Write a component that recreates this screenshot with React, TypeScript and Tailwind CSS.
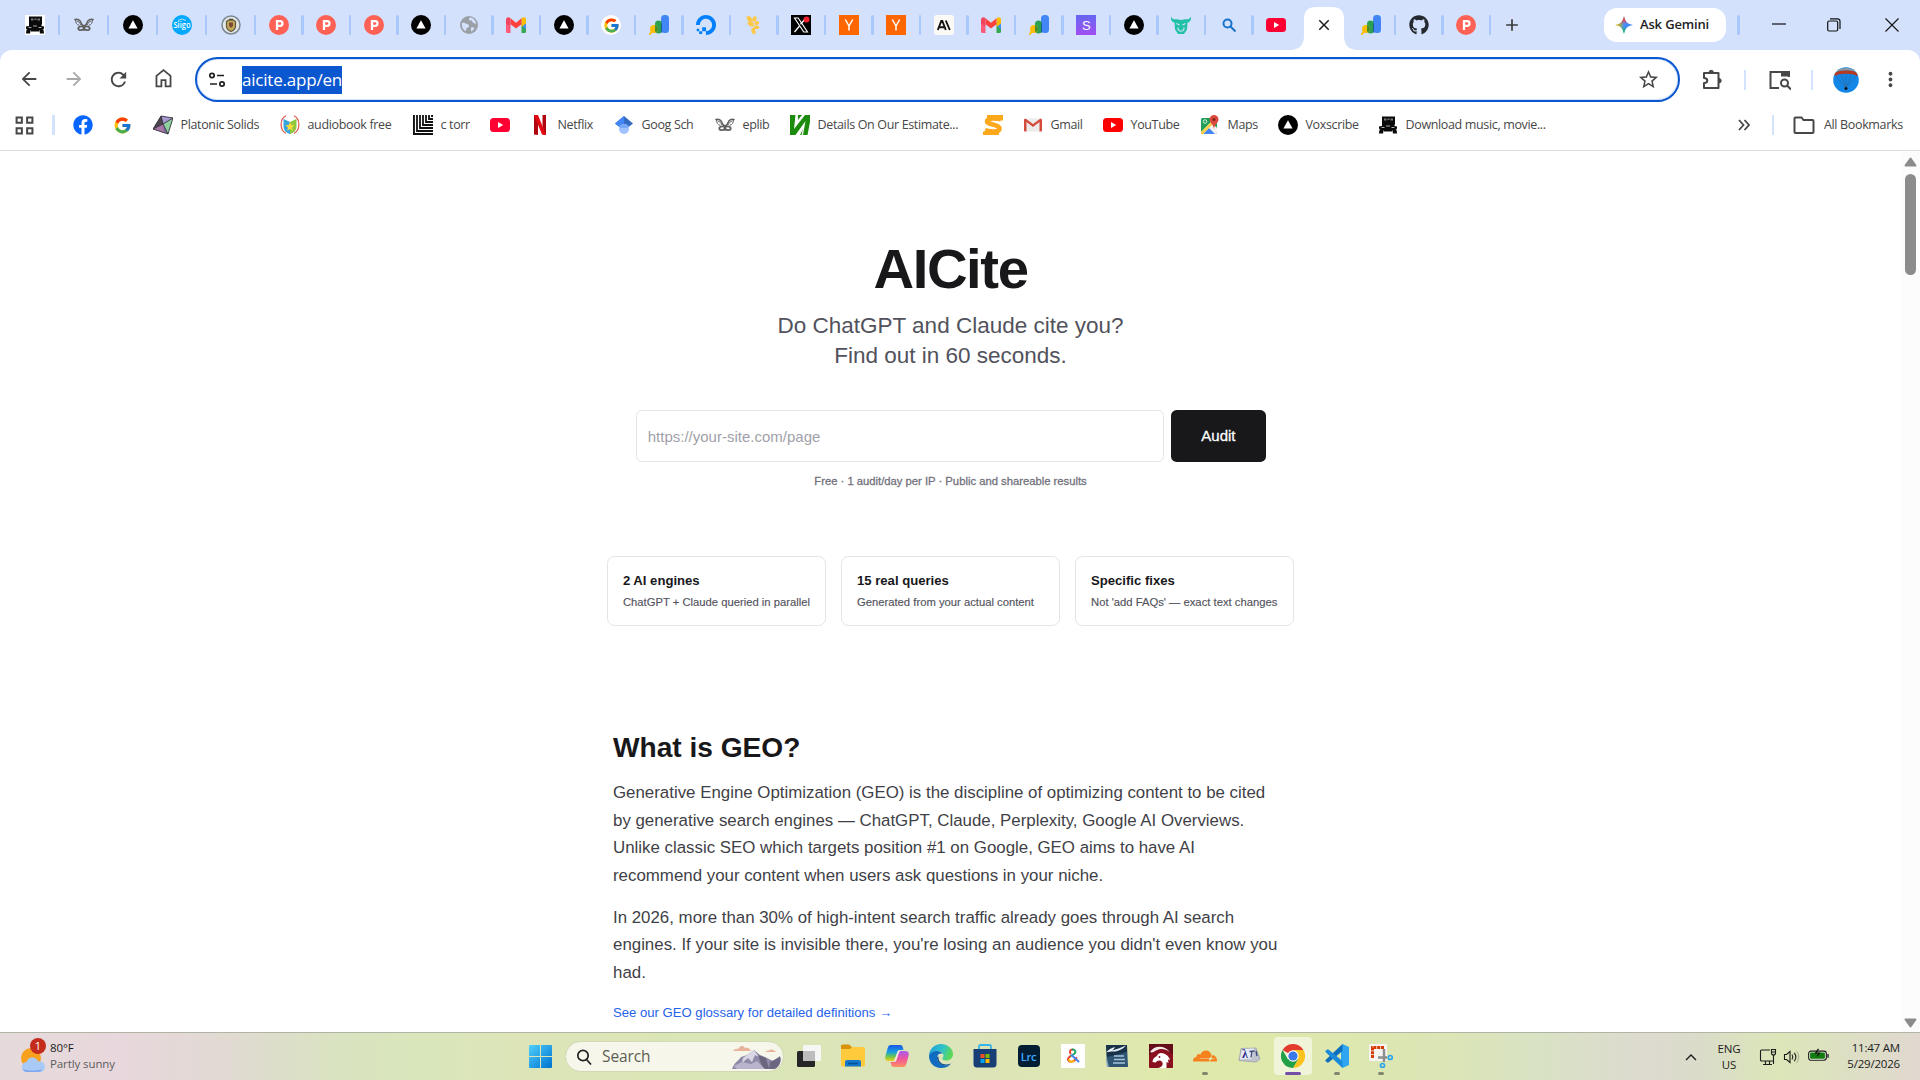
import React from 'react';
import { FcGoogle } from 'react-icons/fc';
import { FaFacebook, FaGithub } from 'react-icons/fa';
import { SiDigitalocean, SiCloudflare } from 'react-icons/si';
import { MdArrowBack, MdArrowForward, MdRefresh, MdStarOutline, MdMoreVert, MdAdd, MdClose } from 'react-icons/md';

/* ---------- Favicons ---------- */

const TruckIcon = () => (
  <svg viewBox="0 0 20 20" className="w-5 h-5">
    <rect width="20" height="20" fill="#fff" />
    <path d="M4 1.500h13v8H4z" fill="#0a0a0a" />
    <path d="M6 3.500h2.500v2H6zM9.500 3.500h2v1.500h-2zM12.500 3.500H15v2h-2.500z" fill="#777" />
    <path d="M1 11.500l3-.5V9h12.500v2l2.500.5v2l-2 1.500H3l-2-1.500z" fill="#0a0a0a" />
    <path d="M1.500 14.500L6 14l-1 4.500H1zM14 14l4.500.5.500 4h-4z" fill="#0a0a0a" />
    <path d="M6 14.500h8v2H6z" fill="#0a0a0a" />
    <path d="M3.500 12.500h3M13.500 12.500h3M8 11h4" stroke="#bbb" strokeWidth=".9" />
  </svg>
);

const MothIcon = () => (
  <svg viewBox="0 0 20 20" className="w-5 h-5" fill="none" stroke="#5f5f5f" strokeLinecap="round">
    <path d="M1 4.500c2.500-.8 5 .2 5.800 2.700.6 2 1.400 3.300 3.200 4.300 1.800-1 2.600-2.300 3.200-4.300.8-2.500 3.300-3.500 5.800-2.700" strokeWidth="1.500" />
    <path d="M1.500 5c.2 3 1 4.500 3.500 5.300M18.500 5c-.2 3-1 4.500-3.500 5.300M3 6c2 .5 3 2 3.500 3.500M17 6c-2 .5-3 2-3.500 3.500" strokeWidth="1" />
    <path d="M9 11.500c-3-.5-4.700.5-4.700 2S7 16 10 14c3 2 5.700 1 5.700-.5s-1.700-2.500-4.700-2" strokeWidth="1.900" />
    <path d="M10 11v3.500" strokeWidth="2.500" />
  </svg>
);

const VercelIcon = () => (
  <svg viewBox="0 0 20 20" className="w-5 h-5">
    <circle cx="10" cy="10" r="10" fill="#000" />
    <path d="M10 5.200l4.600 8.300H5.400z" fill="#fff" />
  </svg>
);

const SiigoIcon = () => (
  <svg viewBox="0 0 20 20" className="w-5 h-5">
    <circle cx="10" cy="10" r="10" fill="#00a9ff" />
    <text x="10" y="13.200" textAnchor="middle" fontSize="8.500" fontWeight="600" fontFamily="Open Sans, sans-serif" fill="#fff" textLength="17" lengthAdjust="spacingAndGlyphs">Siigo</text>
    <path d="M6 5.500q4-3 8 0" stroke="#fff" strokeWidth=".7" fill="none" />
  </svg>
);

const CrestIcon = () => (
  <svg viewBox="0 0 20 20" className="w-5 h-5">
    <circle cx="10" cy="10" r="9" fill="#e3e6e2" stroke="#7b8894" strokeWidth="1.500" />
    <path d="M5.500 6.500l2-1.500h5l2 1.500V11c0 3-2 4.500-4.500 5.500-2.500-1-4.500-2.500-4.500-5.500z" fill="#c4a95a" stroke="#5f5a45" strokeWidth="1.200" />
    <path d="M8 7.500h4V11l-2 2-2-2z" fill="#7a4a33" />
    <path d="M8 4.500h4" stroke="#4b4b3c" strokeWidth="1.500" />
  </svg>
);

const ProductIcon = () => (
  <svg viewBox="0 0 20 20" className="w-5 h-5">
    <circle cx="10" cy="10" r="10" fill="#ff6154" />
    <path d="M8 15V6.200h3.200a2.300 2.300 0 010 4.600H8" fill="none" stroke="#fff" strokeWidth="2.300" />
  </svg>
);

const GlobeIcon = () => (
  <svg viewBox="0 0 20 20" className="w-5 h-5">
    <circle cx="10" cy="10" r="9" fill="#9aa0a6" />
    <path d="M3 8c3-1 4 1 6 1.500 2 .5 1 3-1 3.500-1 .3-.5 3-2 3C3.500 14 2.500 11 3 8zM11 2.500c-2 1.500-1 3 1 3 1.500 0 1 2 2.500 2.500 1.500.4 2 .5 2.700 2 .3-4-2.700-7-6.200-7.500zM12 12.500c1.500-.5 3 0 3.500 1-.8 1.300-2 2.300-3.500 3z" fill="#d3e1fd" />
  </svg>
);

const GmailIcon = () => (
  <svg viewBox="0 0 20 20" className="w-5 h-5">
    <path d="M15.500 8v10h3a1.500 1.500 0 001.500-1.500V5z" fill="#34a853" />
    <path d="M20 7.500v7l-4.500-4z" fill="#3f8ff5" />
    <path d="M15.500 12L20 8.500V4.500c0-2.500-2.500-3-4.500-1.300z" fill="#fbbc04" />
    <path d="M4.500 3.200L10 7.700l5.500-4.500v6L10 13.600 4.500 9.200z" fill="#fc413d" />
    <path d="M4.500 3.200C2.500 1.500 0 2.300 0 4.800V9l4.500 3.500z" fill="#f2445c" />
    <path d="M0 8.500l4.500 3.800V18h-3A1.500 1.500 0 010 16.500z" fill="#ff5a7a" />
  </svg>
);

const OldGmailIcon = () => (
  <svg viewBox="0 0 20 20" className="w-5 h-5">
    <rect x="1" y="3.500" width="18" height="13" rx="1.500" fill="#ececec" />
    <path d="M1 5v10.500a1 1 0 001 1h1.500V7l6.500 5 6.500-5v9.500H18a1 1 0 001-1V5c0-1-1.300-1.700-2.200-1L10 9 3.200 4C2.300 3.300 1 4 1 5z" fill="#d54b3d" />
  </svg>
);

const WhiteGoogle = () => (
  <span className="w-5 h-5 rounded-full bg-white flex items-center justify-center">
    <FcGoogle size={17} />
  </span>
);

const AnalyticsIcon = () => (
  <svg viewBox="0 0 20 20" className="w-5 h-5">
    <rect x="12" y="0" width="8" height="18" rx="3.500" fill="#4285f4" />
    <rect x="6" y="5.500" width="7" height="13" rx="3.500" fill="#2aa050" />
    <path d="M12 7.500c.8.700 1 1.500 1 2.500v5c0 1.500-.5 2.500-1 3z" fill="#1a5c8a" />
    <circle cx="5" cy="14" r="4" fill="#fbbc04" />
    <path d="M6 10.200a4 4 0 013 3.800 4 4 0 01-2 3.500c-1-1-1-2-1-3.500z" fill="#3f8f2f" />
    <path d="M3.500 15.500L1 19" stroke="#fbbc04" strokeWidth="2" strokeLinecap="round" />
  </svg>
);

const PlantIcon = () => (
  <svg viewBox="0 0 20 20" className="w-5 h-5" fill="#fbc84a">
    <ellipse cx="5.500" cy="4" rx="3.400" ry="2.200" transform="rotate(45 5.500 4)" />
    <ellipse cx="10.500" cy="4" rx="2" ry="2.800" transform="rotate(15 10.500 4)" />
    <ellipse cx="6.500" cy="9" rx="3.300" ry="2" transform="rotate(35 6.500 9)" />
    <ellipse cx="12.800" cy="8" rx="2.500" ry="1.900" transform="rotate(-25 12.800 8)" />
    <ellipse cx="12.500" cy="12.300" rx="2.900" ry="1.800" />
    <ellipse cx="9.500" cy="16" rx="2" ry="3.300" transform="rotate(-15 9.500 16)" />
    <path d="M8 6l3 6-1 4" stroke="#fbc84a" fill="none" />
  </svg>
);

const XIcon = () => (
  <svg viewBox="0 0 20 20" className="w-5 h-5">
    <rect width="20" height="20" fill="#000" />
    <path d="M3.500 3h3.700l9.300 14h-3.700z" fill="none" stroke="#fff" strokeWidth="1.100" />
    <path d="M15 3l-5.500 6.200M8.500 11L3.500 17" stroke="#fff" strokeWidth="1.300" />
    <circle cx="15.500" cy="4.500" r="3" fill="#f4212e" />
  </svg>
);

const YcIcon = () => (
  <svg viewBox="0 0 20 20" className="w-5 h-5">
    <rect width="20" height="20" fill="#ff6600" />
    <path d="M6.300 4.500L10 11l3.700-6.500M10 11v4.500" stroke="#fff" strokeWidth="1.500" fill="none" />
  </svg>
);

const AnthropicIcon = () => (
  <svg viewBox="0 0 20 20" className="w-5 h-5">
    <rect width="20" height="20" rx="3" fill="#faf9f5" />
    <path d="M3.800 15L7.300 6h1L11.800 15M5.300 12.200h5M11.800 5.500L15.800 15" stroke="#141413" strokeWidth="1.900" fill="none" />
  </svg>
);

const PurpleSIcon = () => (
  <span className="w-5 h-5 bg-linear-to-b from-[#6366f1] to-[#a04df2] flex items-center justify-center text-white text-[13px] leading-none font-['Liberation_Sans',sans-serif]">S</span>
);

const BullIcon = () => (
  <svg viewBox="0 0 20 20" className="w-5 h-5">
    <path d="M0 1.500C1 4 3 4.500 6 4.200L10 5l4-.8c3 .3 5-.2 6-2.700.5 3-.8 5.500-3.500 6l-.5 7L13 19H7l-3-4.500-.5-7C.8 7-.5 4.500 0 1.500z" fill="#22c1a5" />
    <path d="M5.500 8.500l3 1.500M14.500 8.500l-3 1.500" stroke="#d3e1fd" strokeWidth="1.300" />
    <path d="M7 12.500V14l1.500 2h3l1.500-2v-1.500" fill="none" stroke="#d3e1fd" strokeWidth="1.200" />
  </svg>
);

const SearchTabIcon = () => (
  <svg viewBox="0 0 20 20" className="w-5 h-5" fill="none" stroke="#1a73c8">
    <circle cx="8.500" cy="8.500" r="4" strokeWidth="2" />
    <path d="M11.500 11.500l5 5" strokeWidth="2" />
  </svg>
);

const YoutubeIcon = ({ color = '#ff0033' }: { color?: string }) => (
  <svg viewBox="0 0 20 20" className="w-5 h-5">
    <rect x="0" y="3" width="20" height="14" rx="3.500" fill={color} />
    <path d="M8 7l5.200 3L8 13z" fill="#fff" />
  </svg>
);

const PolyhedronIcon = () => (
  <svg viewBox="0 0 20 20" className="w-5 h-5">
    <path d="M8 1l12 2-5 16L0 14z" fill="#7f6a9c" />
    <path d="M8 1l12 2-10 6z" fill="#a79ad0" />
    <path d="M8 1l2 8-10 5z" fill="#4b4650" />
    <path d="M20 3l-5 16-5-10z" fill="#8fce9d" />
    <path d="M0 14l10-5 1 9z" fill="#a978a8" />
    <path d="M8 1l12 2-5 16L0 14zM20 3L10 9 8 1M0 14l10-5 5 10" fill="none" stroke="#2b2b33" strokeWidth=".8" />
  </svg>
);

const AudiobookIcon = () => (
  <svg viewBox="0 0 20 20" className="w-5 h-5">
    <path d="M6 .8C-.5 4-.5 15 6 18.500M14 .8c6.500 3.200 6.500 14.200 0 17.700" fill="none" stroke="#e2574c" strokeWidth="1.200" />
    <path d="M3.500 4l6.500 3v12c-4-1-6.500-4-6.500-8z" fill="#38a4dd" />
    <path d="M16.500 4L10 7v12c4-1 6.500-4 6.500-8z" fill="#8dc63f" />
    <path d="M10 7l1.300 3 3.200.3-2.500 2.200.8 3.200L10 14l-2.800 1.700.8-3.200-2.500-2.200 3.200-.3z" fill="#ffd93b" />
  </svg>
);

const MazeIcon = () => (
  <svg viewBox="0 0 20 20" className="w-5 h-5">
    <rect width="20" height="20" fill="#111" />
    <path d="M2.500 0v17.500H20M5.500 0v14.500H20M8.500 0v11.500H20M11.500 0v8.500H20M14.500 0v5.500H20M17.500 0v2.500H20" fill="none" stroke="#fff" strokeWidth="1.200" />
  </svg>
);

const NetflixIcon = () => (
  <svg viewBox="0 0 20 20" className="w-5 h-5">
    <path d="M4 0h4v20l-4-.5zM12.500 0h3.500v20l-3.500-.5z" fill="#b1060f" />
    <path d="M4 0h4l8 20-4-.5z" fill="#e50914" />
  </svg>
);

const ScholarIcon = () => (
  <svg viewBox="0 0 20 20" className="w-5 h-5">
    <path d="M10 1L1 8.500l4.500 3.500h9L19 8.500z" fill="#356ac3" />
    <path d="M1 8.500L5.500 12H10V1z" fill="#4285f4" />
    <circle cx="10" cy="14" r="5" fill="#a0c3ff" />
    <path d="M5.300 12a5 5 0 019.400 0L13 13H7z" fill="#76a7fa" />
  </svg>
);

const GreenIcon = () => (
  <svg viewBox="0 0 20 20" className="w-5 h-5">
    <path d="M0 0h5.500L4 14 15 0h5v7l-2.500 13H13l2.500-14L5.500 20H0z" fill="#1c8c0c" />
    <path d="M8 0h4L8 5zM7 20h3l3-6-1.500 6z" fill="#1c8c0c" />
  </svg>
);

const OrangeSIcon = () => (
  <svg viewBox="0 0 20 20" className="w-5 h-5">
    <path d="M4 1.800h16M0 18.200h16" stroke="#fba81c" strokeWidth="3.600" />
    <path d="M18 5.500V4.300c-3-1-13.500-1.800-14 1.700-.5 4 12.500 3 12.500 7.700 0 4-11 3-14.500 1.500" fill="none" stroke="#fba81c" strokeWidth="4.600" />
  </svg>
);

const MapsIcon = () => (
  <svg viewBox="0 0 20 20" className="w-5 h-5">
    <rect x="1" y="3" width="16" height="16" rx="1.500" fill="#1e9e58" />
    <path d="M1 17L11 7l6 6v4.500a1.500 1.500 0 01-1.500 1.500h-13A1.500 1.500 0 011 17.500z" fill="#f3f3f3" />
    <path d="M3 19l6-6 6 6z" fill="#4285f4" />
    <path d="M1 17L14 4l2 2L3 19H1z" fill="#fdd048" />
    <path d="M14 0a4.500 4.500 0 014.500 4.500C18.500 8 14.500 9 14 14c-.5-5-4.500-6-4.500-9.500A4.500 4.500 0 0114 0z" fill="#dc4b3e" />
    <circle cx="14" cy="4.500" r="1.600" fill="#7b231e" />
    <circle cx="5" cy="6.500" r="1.800" fill="none" stroke="#fff" strokeWidth=".8" />
  </svg>
);

/* ---------- Browser ---------- */

interface Tab {
  icon: React.ReactNode;
  width?: string;
  active?: boolean;
  last?: boolean;
}

const tabs: Tab[] = [
  { icon: <TruckIcon />, width: 'w-[49px]' },
  { icon: <MothIcon />, width: 'w-[49px]' },
  { icon: <VercelIcon />, width: 'w-[49px]' },
  { icon: <SiigoIcon />, width: 'w-[49px]' },
  { icon: <CrestIcon />, width: 'w-[49px]' },
  { icon: <ProductIcon /> },
  { icon: <ProductIcon /> },
  { icon: <ProductIcon /> },
  { icon: <VercelIcon /> },
  { icon: <GlobeIcon /> },
  { icon: <GmailIcon /> },
  { icon: <VercelIcon /> },
  { icon: <WhiteGoogle /> },
  { icon: <AnalyticsIcon /> },
  { icon: <SiDigitalocean size={20} color="#0080ff" /> },
  { icon: <PlantIcon /> },
  { icon: <XIcon /> },
  { icon: <YcIcon /> },
  { icon: <YcIcon /> },
  { icon: <AnthropicIcon /> },
  { icon: <GmailIcon /> },
  { icon: <AnalyticsIcon /> },
  { icon: <PurpleSIcon /> },
  { icon: <VercelIcon /> },
  { icon: <BullIcon /> },
  { icon: <SearchTabIcon /> },
  { icon: <YoutubeIcon />, last: true },
  { icon: <MdClose size={18} color="#1f1f1f" />, active: true },
  { icon: <AnalyticsIcon /> },
  { icon: <FaGithub size={20} color="#24292f" /> },
  { icon: <ProductIcon /> },
];

const TabStrip = () => (
  <div className="h-[50px] bg-[#d3e1fd] flex items-center pl-[10px]">
    {tabs.map((tab, i) =>
      tab.active ? (
        <div key={i} className="relative w-[47.500px] h-full pt-[7px] flex justify-center">
          <svg viewBox="0 0 68 43" className="absolute -left-[10px] bottom-0 w-[68px] h-[43px]">
            <path d="M0 43c9 0 14-5 14-14V12C14 4 18 0 26 0h16c8 0 12 4 12 12v17c0 9 5 14 14 14z" fill="#fff" />
          </svg>
          <div className="relative h-[36px] flex items-center">{tab.icon}</div>
        </div>
      ) : (
        <div key={i} className={`relative h-5 flex items-center justify-center ${tab.width ?? 'w-[47.500px]'}`}>
          {tab.icon}
          {!tab.last && <span className="absolute -right-px top-0 w-[2.500px] h-5 rounded bg-[#a8c7fa]" />}
        </div>
      )
    )}
    <MdAdd size={20} color="#3c3c3c" className="ml-[12px]" />
    <div className="ml-[82px] w-[122px] h-[34px] rounded-[13px] bg-white flex items-center pl-[11px] gap-[7px]">
      <svg viewBox="0 0 20 20" className="w-[18px] h-[18px]">
        <defs>
          <linearGradient id="gem" x1="0" y1="0" x2="1" y2="0">
            <stop offset="0" stopColor="#fbbc04" />
            <stop offset=".3" stopColor="#9aa85a" />
            <stop offset=".5" stopColor="#4b8df8" />
            <stop offset="1" stopColor="#3186ff" />
          </linearGradient>
          <linearGradient id="gemV" x1="0" y1="0" x2="0" y2="1">
            <stop offset="0" stopColor="#f2423a" />
            <stop offset=".2" stopColor="#f2423a" />
            <stop offset=".45" stopColor="#f2423a" stopOpacity="0" />
            <stop offset=".6" stopColor="#0ebc5f" stopOpacity="0" />
            <stop offset=".85" stopColor="#0ebc5f" />
          </linearGradient>
        </defs>
        <path d="M10 0c1 6 4 9 10 10-6 1-9 4-10 10-1-6-4-9-10-10 6-1 9-4 10-10z" fill="url(#gem)" />
        <path d="M10 0c1 6 4 9 10 10-6 1-9 4-10 10-1-6-4-9-10-10 6-1 9-4 10-10z" fill="url(#gemV)" />
      </svg>
      <span className="text-[13px] font-semibold tracking-[-0.15px] text-[#1f1f1f] whitespace-nowrap">Ask Gemini</span>
    </div>
    <span className="ml-[11px] w-[2.500px] h-5 rounded bg-[#a8c7fa]" />
    <svg viewBox="0 0 14 14" className="ml-[32px] w-[14px] h-[14px]" stroke="#111" strokeWidth="1.200"><path d="M0 6h14" /></svg>
    <svg viewBox="0 0 14 14" className="ml-[41px] w-[14px] h-[14px]" fill="none" stroke="#111" strokeWidth="1.200">
      <rect x=".7" y="3" width="10" height="10" rx="1.500" />
      <path d="M3 .8h7.500a2.500 2.500 0 012.500 2.500V11" />
    </svg>
    <svg viewBox="0 0 14 14" className="ml-[44px] w-[14px] h-[14px]" stroke="#111" strokeWidth="1.100"><path d="M.5.500l13 13M13.500.500l-13 13" /></svg>
  </div>
);

const Toolbar = () => (
  <div className="h-[45px] flex items-center">
    <div className="flex pl-[6px] mr-[9px] text-[#474747]">
      <div className="w-[45px] flex justify-center"><MdArrowBack size={22} /></div>
      <div className="w-[45px] flex justify-center"><MdArrowForward size={22} color="#a9a9a9" /></div>
      <div className="w-[45px] flex justify-center"><MdRefresh size={23} /></div>
      <div className="w-[45px] flex justify-center">
        <svg viewBox="0 0 20 20" className="w-[21px] h-[21px]" fill="none" stroke="#474747" strokeWidth="1.700">
          <path d="M3.300 7.500L10 2l6.700 5.500v10H12v-6H8v6H3.300z" />
        </svg>
      </div>
    </div>
    <div className="w-[1485px] h-[45px] rounded-full border-[2.500px] border-[#0b57d0] shadow-[inset_0_0_0_1px_#a8c7fa80] flex items-center pl-[11px]">
      <svg viewBox="0 0 18 18" className="w-[18px] h-[18px]" fill="none" stroke="#1f1f1f" strokeWidth="1.700">
        <circle cx="4" cy="4.500" r="2.200" />
        <path d="M9 4.500h7M2 13h7" />
        <circle cx="14" cy="13" r="2.200" />
      </svg>
      <div className="ml-4 h-7 bg-[#0b57d0] text-white text-[17px] leading-[28px] tracking-[-0.2px] whitespace-nowrap">aicite.app/en</div>
      <MdStarOutline size={23} color="#474747" className="ml-auto mr-[18px]" />
    </div>
    <div className="flex items-center pl-[9px]">
      <div className="w-[45px] flex justify-center">
        <svg viewBox="0 0 22 22" className="w-[22px] h-[22px]" fill="none" stroke="#474747" strokeWidth="2">
          <path d="M3 4h14.500v15H3v-5c2.500 0 3.300-1 3.300-2.500S5.500 9 3 9z" strokeLinejoin="round" />
          <path d="M8 3.500a2.200 2.200 0 014.400 0zM18 9.500a2.200 2.200 0 010 4.400z" fill="#474747" strokeWidth="1" />
        </svg>
      </div>
      <span className="ml-[10px] w-[2px] h-5 bg-[#d3e3fd]" />
      <div className="ml-[11px] w-[45px] flex justify-center">
        <svg viewBox="0 0 22 22" className="w-[22px] h-[22px]" fill="none" stroke="#474747" strokeWidth="2">
          <path d="M10 19H1.500V3H20v5" />
          <path d="M12 2h9v5.500h-9z" fill="#474747" stroke="none" />
          <circle cx="15.500" cy="14" r="3.500" />
          <path d="M18 16.500l4 4" />
        </svg>
      </div>
      <span className="ml-[9px] w-[2px] h-5 bg-[#d3e3fd]" />
      <div className="ml-[10px] w-[45px] flex justify-center">
        <svg viewBox="0 0 26 26" className="w-[26px] h-[26px]">
          <clipPath id="av"><circle cx="13" cy="13" r="12.800" /></clipPath>
          <g clipPath="url(#av)">
            <rect width="26" height="26" fill="#1287e8" />
            <path d="M1 7C4 2 22 2 25 7l-1 2C20 6 6 6 2 9z" fill="#b53a24" />
            <path d="M3 4C8 0 18 0 23 4l1 1.500C18 2.500 8 2.500 2 5.500z" fill="#8d9aa0" />
            <path d="M3 9l10 12L23 9M8 7.500l5 13.500 5-13.500M13 7v14" fill="none" stroke="#46536b" strokeWidth=".4" />
            <circle cx="13" cy="21.500" r="1.500" fill="#111" />
          </g>
        </svg>
      </div>
      <div className="w-[45px] flex justify-center"><MdMoreVert size={23} color="#474747" /></div>
    </div>
  </div>
);

interface Bookmark {
  icon: React.ReactNode;
  label?: string;
  width: string;
}

const bookmarks: Bookmark[] = [
  { icon: <FaFacebook size={20} color="#0866ff" />, width: 'w-[40px]' },
  { icon: <FcGoogle size={19} />, width: 'w-[40px]' },
  { icon: <PolyhedronIcon />, label: 'Platonic Solids', width: 'w-[127px]' },
  { icon: <AudiobookIcon />, label: 'audiobook free', width: 'w-[133px]' },
  { icon: <MazeIcon />, label: 'c torr', width: 'w-[77px]' },
  { icon: <YoutubeIcon />, width: 'w-[40px]' },
  { icon: <NetflixIcon />, label: 'Netflix', width: 'w-[84px]' },
  { icon: <ScholarIcon />, label: 'Goog Sch', width: 'w-[101px]' },
  { icon: <MothIcon />, label: 'eplib', width: 'w-[75px]' },
  { icon: <GreenIcon />, label: 'Details On Our Estimate...', width: 'w-[193px]' },
  { icon: <OrangeSIcon />, width: 'w-[40px]' },
  { icon: <OldGmailIcon />, label: 'Gmail', width: 'w-[80px]' },
  { icon: <YoutubeIcon color="#ff0000" />, label: 'YouTube', width: 'w-[97px]' },
  { icon: <MapsIcon />, label: 'Maps', width: 'w-[78px]' },
  { icon: <VercelIcon />, label: 'Voxscribe', width: 'w-[100px]' },
  { icon: <TruckIcon />, label: 'Download music, movie...', width: 'w-[190px]' },
];

const BookmarksBar = () => (
  <div className="h-[46px] flex items-center text-[12.500px] tracking-[-0.35px] text-[#474747] whitespace-nowrap">
    <svg viewBox="0 0 18 18" className="ml-[15px] w-[19px] h-[19px]" fill="none" stroke="#474747" strokeWidth="1.900">
      <path d="M1.500 1.500h5v5h-5zM11.500 1.500h5v5h-5zM1.500 11.500h5v5h-5zM11.500 11.500h5v5h-5z" />
    </svg>
    <span className="ml-[18px] mr-[18px] w-[2.500px] h-5 bg-[#d3e3fd]" />
    {bookmarks.map((b, i) => (
      <div key={i} className={`flex items-center gap-[8px] shrink-0 ${b.width}`}>
        <span className="w-5 flex justify-center shrink-0">{b.icon}</span>
        {b.label && <span className="pt-px">{b.label}</span>}
      </div>
    ))}
    <svg viewBox="0 0 12 12" className="ml-auto w-[12px] h-[12px]" fill="none" stroke="#474747" strokeWidth="1.800">
      <path d="M1 1l4.500 5L1 11M6.500 1L11 6l-4.500 5" />
    </svg>
    <span className="ml-[22px] w-[2.500px] h-5 bg-[#d3e3fd]" />
    <svg viewBox="0 0 22 18" className="ml-[19px] w-[22px] h-[18px]" fill="none" stroke="#474747" strokeWidth="2">
      <path d="M1.500 2.500a1 1 0 011-1h6l2 2.500h9a1 1 0 011 1v11a1 1 0 01-1 1h-17a1 1 0 01-1-1z" />
    </svg>
    <span className="ml-[9px] w-[78px] mr-[18px] pt-px">All Bookmarks</span>
  </div>
);

/* ---------- Page ---------- */

const features = [
  { title: '2 AI engines', text: 'ChatGPT + Claude queried in parallel' },
  { title: '15 real queries', text: 'Generated from your actual content' },
  { title: 'Specific fixes', text: "Not 'add FAQs' — exact text changes" },
];

const Page = () => (
  <main className="flex-1 overflow-hidden bg-white text-zinc-900 font-['Liberation_Sans',Arial,sans-serif]">
    <div className="[zoom:0.9375]">
      <section className="pt-24 text-center">
        <h1 className="text-6xl leading-none font-bold tracking-tight">AICite</h1>
        <p className="mt-[15px] mb-[41px] text-2xl text-zinc-600">
          Do ChatGPT and Claude cite you?
          <br />
          Find out in 60 seconds.
        </p>
        <form className="mx-auto max-w-2xl flex gap-2">
          <input
            type="text"
            placeholder="https://your-site.com/page"
            className="flex-1 h-14 px-3 rounded-md border border-zinc-200 text-base placeholder:text-zinc-400"
          />
          <button type="button" className="h-14 px-8 rounded-md bg-zinc-900 text-white text-base font-medium [-webkit-text-stroke:0.3px_white]">
            Audit
          </button>
        </form>
        <p className="mt-3 text-xs text-zinc-500 [-webkit-text-stroke:0.3px_#71717b]">Free · 1 audit/day per IP · Public and shareable results</p>
      </section>

      <section className="mt-18 mx-auto w-[733px] grid grid-cols-3 gap-4">
        {features.map((f) => (
          <div key={f.title} className="p-4 rounded-lg border border-zinc-200 whitespace-nowrap">
            <h3 className="text-sm font-bold">{f.title}</h3>
            <p className="mt-1 text-xs text-zinc-600 [-webkit-text-stroke:0.15px_#52525c]">{f.text}</p>
          </div>
        ))}
      </section>

      <section className="mt-28 mx-auto max-w-3xl pl-6 pr-8">
        <h2 className="text-3xl font-bold">What is GEO?</h2>
        <p className="mt-4 text-lg leading-relaxed text-zinc-700">
          Generative Engine Optimization (GEO) is the discipline of optimizing content to be cited by generative search
          engines — ChatGPT, Claude, Perplexity, Google AI Overviews. Unlike classic SEO which targets position #1 on
          Google, GEO aims to have AI recommend your content when users ask questions in your niche.
        </p>
        <p className="mt-4 text-lg leading-relaxed text-zinc-700">
          In 2026, more than 30% of high-intent search traffic already goes through AI search engines. If your site is
          invisible there, you're losing an audience you didn't even know you had.
        </p>
        <a href="#" className="mt-[19px] inline-block text-sm text-[#2563eb]">
          See our GEO glossary for detailed definitions →
        </a>
      </section>
    </div>
  </main>
);

const Scrollbar = () => (
  <div className="w-[19px] bg-[#fcfcfc] flex flex-col items-center">
    <svg viewBox="0 0 13 10" className="mt-[6px] w-[13px] h-[10px]"><path d="M6.500 1.500L11.500 8.500h-10z" fill="#8b8b8b" stroke="#8b8b8b" strokeWidth="2" strokeLinejoin="round" /></svg>
    <div className="mt-[7px] w-[11px] h-[101px] rounded-full bg-[#8b8b8b]" />
    <svg viewBox="0 0 13 10" className="mt-auto mb-[4px] w-[13px] h-[10px]"><path d="M6.500 8.500L11.500 1.500h-10z" fill="#8b8b8b" stroke="#8b8b8b" strokeWidth="2" strokeLinejoin="round" /></svg>
  </div>
);

/* ---------- Taskbar ---------- */

const TaskViewIcon = () => (
  <svg viewBox="0 0 24 24" className="w-6 h-6">
    <rect x="0" y="7" width="18" height="16" rx="1.500" fill="#262626" />
    <rect x="6" y="1" width="18" height="16" rx="1.500" fill="#f6f6f4" />
    <rect x="6" y="7" width="12" height="10" fill="#bdbdbd" />
  </svg>
);

const ExplorerIcon = () => (
  <svg viewBox="0 0 24 24" className="w-6 h-6">
    <path d="M0 2a1.500 1.500 0 011.500-1.500H8L11 3v4H0z" fill="#d8920b" />
    <path d="M0 5h9l2-2h11.500A1.500 1.500 0 0124 4.500V21a1.500 1.500 0 01-1.500 1.500h-21A1.500 1.500 0 010 21z" fill="#ffcb3d" />
    <path d="M4 22.500V18a2 2 0 012-2h12a2 2 0 012 2v4.500z" fill="#1178cc" />
    <path d="M7.500 19.500h9" stroke="#0a4f93" strokeWidth="1.300" strokeLinecap="round" />
  </svg>
);

const CopilotIcon = () => (
  <svg viewBox="0 0 24 24" className="w-6 h-6">
    <defs>
      <linearGradient id="cpA" x1="0" y1="0" x2="0" y2="1">
        <stop offset="0" stopColor="#1b56e8" />
        <stop offset=".45" stopColor="#19a0e0" />
        <stop offset=".7" stopColor="#63c653" />
        <stop offset="1" stopColor="#f2cf1c" />
      </linearGradient>
      <linearGradient id="cpB" x1="0" y1="0" x2="0" y2="1">
        <stop offset="0" stopColor="#a95bf0" />
        <stop offset=".5" stopColor="#f0559b" />
        <stop offset="1" stopColor="#ff9160" />
      </linearGradient>
    </defs>
    <path d="M6 1h9c2 0 2.500 1 3 3l.5 2h-3c-2 0-3 1-3.500 3l-1.500 5.500c-.5 2-1.500 2.500-3 2.500H4c-3 0-4.500-1.500-3.500-5l2-7.500C3.200 2 4 1 6 1z" fill="url(#cpA)" />
    <path d="M18 23H9c-2 0-2.500-1-3-3l-.5-2h3c2 0 3-1 3.500-3l1.500-5.500C14 7.500 15 7 16.500 7H20c3 0 4.500 1.500 3.500 5l-2 7.500c-.7 2.500-1.500 3.500-3.500 3.500z" fill="url(#cpB)" />
    <path d="M14 6.500L9.500 17.500" stroke="#fbe9ec" strokeWidth="1.500" />
  </svg>
);

const EdgeIcon = () => (
  <svg viewBox="0 0 24 24" className="w-6 h-6">
    <defs>
      <linearGradient id="edA" x1="0" y1="0" x2="1" y2=".3">
        <stop offset="0" stopColor="#1d9be0" />
        <stop offset=".6" stopColor="#2fc3c8" />
        <stop offset="1" stopColor="#5bd858" />
      </linearGradient>
    </defs>
    <path d="M0 12C0 5 5.500 0 12 0s12 4.500 12 10c0 4-3 6.500-6.500 6.500-3 0-4-1-4-2 0-.8 1-1.300 1-3C14.500 9 12 7 9 7c-5 0-8 2-9 5z" fill="url(#edA)" />
    <path d="M0 12c.5-3 4-5 8-5 3 0 5 1 6 3-3-1.500-6 .5-6 4 0 4.500 4 7.500 8.500 7.500 2.500 0 4.500-1 5.500-2-2 3-6 4.500-10 4.500C5 24 0 18.500 0 12z" fill="#0f6cc0" />
    <path d="M8 14c0 4.500 4 7.500 8.500 7.500 2.500 0 4.500-1 5.500-2-1.500.7-3 1-4.500 1C12 20.500 9 17 9.500 12.500 8.500 12.500 8 13 8 14z" fill="#0b4a8f" />
  </svg>
);

const StoreIcon = () => (
  <svg viewBox="0 0 24 24" className="w-6 h-6">
    <path d="M6 7V2.500A1.500 1.500 0 017.500 1h9A1.500 1.500 0 0118 2.500V7" fill="none" stroke="#35b5ea" strokeWidth="1.800" />
    <path d="M.5 5h23v15a3.500 3.500 0 01-3.500 3.500H4A3.500 3.500 0 01.500 20z" fill="#173f75" />
    <path d="M7.500 10h4v4h-4z" fill="#f25022" />
    <path d="M12.500 10h4v4h-4z" fill="#7fba00" />
    <path d="M7.500 15h4v4h-4z" fill="#00a4ef" />
    <path d="M12.500 15h4v4h-4z" fill="#ffb900" />
  </svg>
);

const LrcIcon = () => (
  <span className="w-[22px] h-[22px] rounded-[4px] bg-[#001d33] flex items-center justify-center text-[11px] leading-none font-semibold tracking-[-0.300px] text-[#3fa9ff]">Lrc</span>
);

const AmpIcon = () => (
  <svg viewBox="0 0 24 24" className="w-6 h-6" fill="none" strokeWidth="2" strokeLinecap="round">
    <rect width="24" height="24" fill="#fff" />
    <path d="M9.500 9.500C8 7 9.500 5.500 11.500 5.500" stroke="#ea4335" />
    <path d="M11.500 5.500c3 0 4 2.500 1.500 4.500L9 12.500" stroke="#1fa463" />
    <path d="M9 12.500c-3.500 2-2 5.800 1.500 5.300 3-.4 4-2 5-4" stroke="#ea4335" />
    <path d="M11 11.500l6.500 6" stroke="#4285f4" />
    <path d="M8 16c.8 1.800 2.800 2.300 4.500 1" stroke="#fbbc04" />
  </svg>
);

const WriterIcon = () => (
  <svg viewBox="0 0 24 24" className="w-6 h-6">
    <path d="M1 1h21l1 22H2z" fill="#2f5573" />
    <path d="M1 1h21v7L2 13z" fill="#18324a" />
    <path d="M1 8.500c3-3.500 6-4.500 9-5.500-1 2-2.500 3.500-3.500 3.500C12 5.500 17 3 21 1.500 18 5 13 7.500 9 7.500c-3 0-5.500 0-8 1z" fill="#e8eff5" />
    <path d="M9 12h10M9 15.500h11M8 19h12" stroke="#a9c4da" strokeWidth="1.400" />
    <path d="M1 11l3 12H2z" fill="#86a7c0" />
  </svg>
);

const DragonIcon = () => (
  <svg viewBox="0 0 24 24" className="w-6 h-6">
    <rect width="24" height="24" rx="1" fill="#8a1020" />
    <path d="M0 0h24v11C16 3 6 3 0 12z" fill="#640d18" />
    <path d="M1 8C5 1.500 15 .5 21 8c-5-3.500-10-4-14-1.500C4.500 8.500 2.500 9 1 8z" fill="#f3e9e9" />
    <path d="M12 9c4 0 8 3 9 7l-2-.5.5 3.500-2-1V24H9c5-1 6-5 3-7-2-1-4 0-5.500 1.500L3.500 18c0-3 2-5 4.500-6 0-1.500 2-3 4-3z" fill="#fff" />
    <circle cx="10.500" cy="13" r=".9" fill="#8a1020" />
  </svg>
);

const LambdaIcon = () => (
  <svg viewBox="0 0 24 24" className="w-6 h-6">
    <path d="M4 4.500l15-.5 4 11-4 3-17-1.500z" fill="#bfc4cf" stroke="#9a9fae" strokeWidth=".8" />
    <path d="M5 5l12-.5-2 10-12 1z" fill="#e8eaf1" />
    <text x="5" y="14" fontSize="12" fontWeight="700" fontFamily="Liberation Serif, serif" fill="#2d2f8f">λ</text>
    <path d="M12.500 7.500l5-.5M15 7.500l-1 6M19 7l1 5" stroke="#3d4a7a" strokeWidth="1.400" />
  </svg>
);

const ChromeIcon = () => (
  <svg viewBox="0 0 24 24" className="w-6 h-6">
    <path d="M12 12L1.600 6A12 12 0 0122.400 6z" fill="#e33b2e" />
    <path d="M22.400 6A12 12 0 0112 24l5.200-9L12 6z" fill="#fcc31e" />
    <path d="M1.600 6A12 12 0 0012 24l5.200-9H12L6.800 15z" fill="#23a047" />
    <circle cx="12" cy="12" r="5.700" fill="#fff" />
    <circle cx="12" cy="12" r="4.600" fill="#3b79ea" />
  </svg>
);

const VsCodeIcon = () => (
  <svg viewBox="0 0 24 24" className="w-6 h-6">
    <path d="M17.500 0L24 3v18l-6.500 3L16 22V2z" fill="#2fa5ef" />
    <path d="M17.500 0v7L3.500 18.500 2 18.500.500 17v-1z" fill="#0e6fbb" />
    <path d="M17.500 24v-7L3.500 5.500H2L.500 7v1z" fill="#1b8ad9" />
  </svg>
);

const SnipIcon = () => (
  <svg viewBox="0 0 24 24" className="w-6 h-6" fill="none">
    <rect x="0" y="0" width="18" height="17" rx="1" fill="#f5f4f2" />
    <path d="M3.500 14V3.500H15" stroke="#d83b01" strokeWidth="3" strokeDasharray="3 .8" />
    <path d="M15 5v13M9 13.500h9" stroke="#8c8c8c" strokeWidth="2.400" />
    <circle cx="21.300" cy="13.500" r="2" stroke="#2aa4ea" strokeWidth="1.700" />
    <circle cx="13.500" cy="21.500" r="2" stroke="#2aa4ea" strokeWidth="1.700" />
  </svg>
);

interface TaskbarApp {
  icon: React.ReactNode;
  running?: boolean;
  active?: boolean;
}

const apps: TaskbarApp[] = [
  { icon: <TaskViewIcon /> },
  { icon: <ExplorerIcon /> },
  { icon: <CopilotIcon /> },
  { icon: <EdgeIcon /> },
  { icon: <StoreIcon /> },
  { icon: <LrcIcon /> },
  { icon: <AmpIcon /> },
  { icon: <WriterIcon /> },
  { icon: <DragonIcon /> },
  { icon: <SiCloudflare size={24} color="#f6821f" />, running: true },
  { icon: <LambdaIcon /> },
  { icon: <ChromeIcon />, active: true },
  { icon: <VsCodeIcon />, running: true },
  { icon: <SnipIcon />, running: true },
];

const Taskbar = () => (
  <footer className="h-[48px] border-t border-[#b2b5a6] flex items-center text-[#1b1b1b] bg-[linear-gradient(90deg,#e5dadb_0px,#e8d7dc_120px,#e0dad2_230px,#d9e3c0_340px,#d9e6bb_420px,#dde5b8_520px,#dae6b6_700px,#dce4ba_950px,#dfe8ad_1150px,#dfe9aa_1250px,#dbe5b6_1450px,#d9e2c4_1540px,#dddad0_1650px,#dadcc9_1700px,#dce6b8_1780px,#dddfc4_1850px,#e1d8d0_1920px)]">
    <div className="w-[527px] pl-5 flex items-center">
      <svg viewBox="0 0 26 38" className="w-[26px] h-[38px]">
        <circle cx="11" cy="20" r="10" fill="#f7a11f" />
        <path d="M7 34a5 5 0 01-.5-10A6 6 0 0118 23.500a5 5 0 013 10.500z" fill="#a9c9f7" />
        <path d="M3 31c4 2 14 2 19 0-.5 2-2 3-4 3H7c-2 0-3.500-1-4-3z" fill="#7da7ee" />
        <circle cx="18" cy="8" r="8" fill="#c42b1c" />
        <text x="18" y="12" textAnchor="middle" fontSize="11" fill="#fff" fontFamily="Open Sans, sans-serif">1</text>
      </svg>
      <div className="ml-1 -mt-[2px] text-[11.500px] leading-[16px] tracking-[-0.100px]">
        <div>80°F</div>
        <div className="text-[#5c5c5c]">Partly sunny</div>
      </div>
    </div>
    <div className="w-[27px] flex justify-center">
      <svg viewBox="0 0 23 23" className="w-[23px] h-[23px]">
        <defs>
          <linearGradient id="win" x1="0" y1="0" x2="1" y2="1">
            <stop offset="0" stopColor="#4fd0fb" />
            <stop offset="1" stopColor="#0072d0" />
          </linearGradient>
        </defs>
        <path d="M0 1a1 1 0 011-1h10v11H0zM12 0h10a1 1 0 011 1v10H12zM0 12h11v11H1a1 1 0 01-1-1zM12 12h11v10a1 1 0 01-1 1H12z" fill="url(#win)" />
      </svg>
    </div>
    <div className="ml-[11px] w-[219px] h-[31px] rounded-full bg-[#f6f7ea] border border-[#d2d8b4] flex items-center pl-[10px] overflow-hidden">
      <svg viewBox="0 0 16 16" className="w-[16px] h-[16px]" fill="none" stroke="#222" strokeWidth="1.700">
        <circle cx="7" cy="6.500" r="5.200" />
        <path d="M10.500 10.500L15 15.500" />
      </svg>
      <span className="ml-[10px] text-[15.500px] tracking-[-0.100px] text-[#5d5d55]">Search</span>
      <svg viewBox="0 0 50 26" className="ml-auto mr-px w-[50px] h-[26px]">
        <path d="M1 7c2-3 5-1 6-3 2-3 5-2 6 0 3-1 5 1 6 3zM33 8c2-2 4-1 5-2 2-1 4 0 6 2z" fill="#e8b39a" />
        <path d="M0 25c2-6 6-8 9-12l6-2 7-5 6 5 5 2 8 4 7-5c2 5-1 12-6 13z" fill="#8f8aa8" />
        <path d="M11 14l4-3 7-5 5 7-4-2-3 7-4-4-6 5z" fill="#d9d6e6" />
        <path d="M26 11l8 3 3 11h-6zM38 18l10-5c2 5-2 11-6 12h-5z" fill="#6d6680" />
        <path d="M2 22l8-4 9 2 6-3 8 8H5z" fill="#b9b3cd" />
      </svg>
    </div>
    <div className="ml-[2.500px] flex">
      {apps.map((app, i) => (
        <div key={i} className="relative w-[44px] h-[47px] flex items-center justify-center">
          {app.active && <span className="absolute top-1 left-[3px] w-[38px] h-[38px] rounded bg-[#f0f4d9]" />}
          <span className="relative -mt-px">{app.icon}</span>
          {app.active && <span className="absolute bottom-[5px] left-[14px] w-4 h-[3px] rounded-full bg-[#744da9]" />}
          {app.running && <span className="absolute bottom-[5px] left-[19px] w-[6px] h-[3px] rounded-full bg-[#83866f]" />}
        </div>
      ))}
    </div>
    <div className="ml-auto mr-[20px] flex items-center text-[11.500px] leading-[16px] tracking-[-0.200px]">
      <svg viewBox="0 0 12 8" className="w-[12px] h-[8px]" fill="none" stroke="#1b1b1b" strokeWidth="1.400"><path d="M1 7l5-5 5 5" /></svg>
      <div className="ml-[20px] w-[24px] text-center">
        <div>ENG</div>
        <div>US</div>
      </div>
      <svg viewBox="0 0 18 18" className="ml-[18px] w-[18px] h-[18px]" fill="none" stroke="#1b1b1b" strokeWidth="1.100">
        <path d="M11 2H2.500a1 1 0 00-1 1v9a1 1 0 001 1H14M4 16.500h9M6.500 13v3.500M10.500 13v3.500M14.500 7v9" />
        <path d="M12.500 1.500h4V5a2 2 0 01-4 0zM12.500 4h4" />
      </svg>
      <svg viewBox="0 0 18 16" className="ml-[6px] w-[18px] h-[16px]" fill="none" stroke="#1b1b1b" strokeWidth="1.100">
        <path d="M1.500 5.500h2L7 2.500v11l-3.500-3h-2z" />
        <path d="M9 5.500c1 1.500 1 3.500 0 5M11.200 3.800c2 2.500 2 6 0 8.400" />
        <path d="M13.500 2c3 3.500 3 8.500 0 12" stroke="#aab08e" />
      </svg>
      <svg viewBox="0 0 22 14" className="ml-[7px] -mt-[3px] w-[21px] h-[14px]">
        <rect x=".7" y="3" width="18.500" height="9.500" rx="2.500" fill="#f2f5e2" stroke="#1b1b1b" strokeWidth="1.200" />
        <rect x="2.200" y="4.500" width="15.500" height="6.500" rx="1" fill="#107c10" />
        <path d="M21 6v4" stroke="#1b1b1b" strokeWidth="1.400" />
        <path d="M11 .500L8 5h4L9.500 8.500" fill="none" stroke="#1b1b1b" strokeWidth="1.400" />
      </svg>
      <div className="ml-[15px] -mt-px w-[56px] text-right whitespace-nowrap">
        <div>11:47 AM</div>
        <div>5/29/2026</div>
      </div>
    </div>
  </footer>
);

const App = () => {
  return (
    <div className="w-[1920px] h-[1080px] flex flex-col overflow-hidden font-['Open_Sans','Noto_Sans',sans-serif]">
      <TabStrip />
      <div className="bg-[#d3e1fd]">
        <div className="h-[101px] pt-[7px] rounded-t-[12px] bg-white border-b border-[#dedede]">
          <Toolbar />
          <BookmarksBar />
        </div>
      </div>
      <div className="h-[881px] flex">
        <Page />
        <Scrollbar />
      </div>
      <Taskbar />
    </div>
  );
};

export default App;
